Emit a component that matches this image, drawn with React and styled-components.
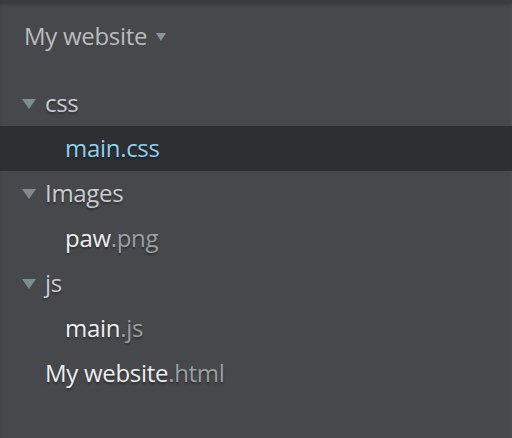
import React from "react";
import styled, { createGlobalStyle } from "styled-components";

const Global = createGlobalStyle`
  html, body { margin: 0; padding: 0; background: #47484c; }
  body { font-family: "Open Sans", "Noto Sans", sans-serif; }
`;

const Sidebar = styled.div`
  width: 512px;
  height: 438px;
  box-sizing: border-box;
  background: #47484c;
  border-top: 2px solid #3a3b3e;
  box-shadow: inset 0 4px 4px -2px rgba(0,0,0,0.25), inset -3px 0 0 -1px #4d4e52;
  display: flex;
  flex-direction: column;
  overflow: hidden;
`;

const Header = styled.div`
  display: flex;
  align-items: center;
  gap: 9px;
  height: 66px;
  padding: 0 0 2px 24px;
  color: #b9bcbe;
  font-size: 24px;
  letter-spacing: -0.3px;
  margin-bottom: 11px;
`;

const Tree = styled.div`
  display: flex;
  flex-direction: column;
`;

const Row = styled.div`
  height: 45px;
  box-sizing: border-box;
  padding-bottom: 3px;
  display: flex;
  align-items: center;
  padding-left: ${p => p.$indent}px;
  background: ${p => (p.$selected ? "#2e2f32" : "transparent")};
  font-size: 24px;
  letter-spacing: -0.3px;
  color: ${p => (p.$selected ? "#8fd1ec" : p.$folder ? "#c9ccce" : "#eceeef")};
  text-shadow: 0 2px 2px rgba(0,0,0,0.35);
`;

const Twisty = styled.svg`
  width: 14px;
  height: 10px;
  margin: 3px 9px 0 0;
  flex: none;
`;

const Ext = styled.span`
  color: #9a9fa2;
`;

const Caret = () => (
  <Twisty viewBox="0 0 14 10">
    <polygon points="0,0 14,0 7,10" fill="#7f8c8f" />
  </Twisty>
);

const SmallCaret = styled.svg`
  width: 10px;
  height: 8px;
  margin-top: 3px;
`;

const items = [
  { name: "css", folder: true, indent: 22 },
  { name: "main", ext: ".css", indent: 65, selected: true, whole: true },
  { name: "Images", folder: true, indent: 22 },
  { name: "paw", ext: ".png", indent: 65 },
  { name: "js", folder: true, indent: 22 },
  { name: "main", ext: ".js", indent: 65 },
  { name: "My website", ext: ".html", indent: 45 },
];

export default function App() {
  return (
    <>
      <Global />
      <Sidebar>
        <Header>
          My website
          <SmallCaret viewBox="0 0 10 8">
            <polygon points="0,0 10,0 5,8" fill="#8a9597" />
          </SmallCaret>
        </Header>
        <Tree>
          {items.map((it, i) => (
            <Row key={i} $indent={it.indent} $selected={it.selected} $folder={it.folder}>
              {it.folder && <Caret />}
              {it.name}
              {it.ext && (it.whole ? it.ext : <Ext>{it.ext}</Ext>)}
            </Row>
          ))}
        </Tree>
      </Sidebar>
    </>
  );
}
